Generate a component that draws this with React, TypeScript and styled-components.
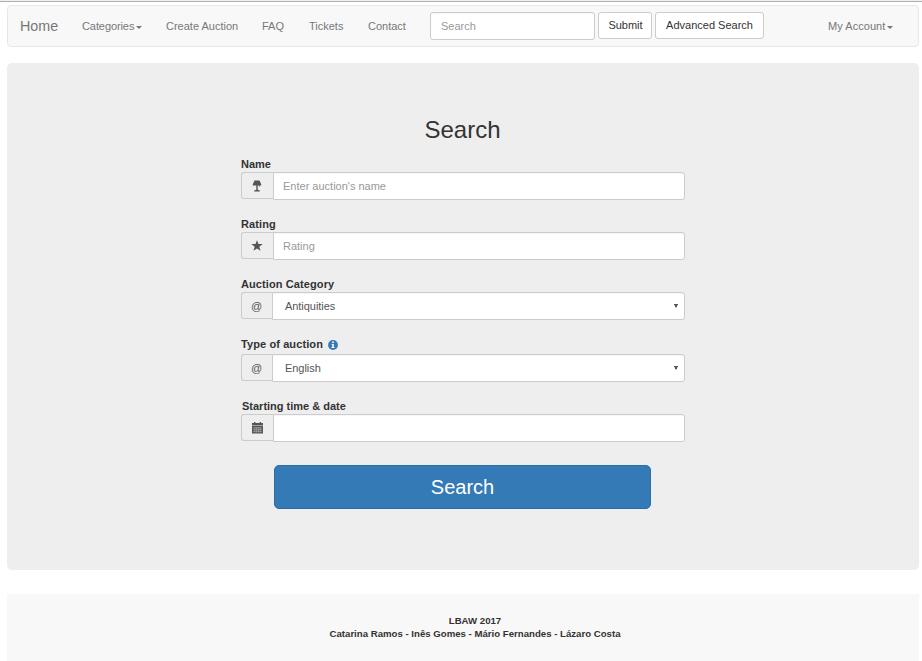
import React from "react";
import styled, { createGlobalStyle } from "styled-components";

const GlobalStyle = createGlobalStyle`
  *, *::before, *::after { box-sizing: border-box; }
  body {
    margin: 0;
    background: #fff;
    color: #333;
    font-family: "Liberation Sans", Arial, Helvetica, sans-serif;
    font-size: 11px;
    line-height: 16px;
  }
  input, button { font-family: inherit; }
`;

const Page = styled.div`
  height: 661px;
  overflow: hidden;
  padding: 0 3px 0 7px;
`;

const TopRule = styled.div`
  height: 2px;
  margin: 0 -3px 3px -7px;
  background: #f0f0f0;
  border-bottom: 1px solid #b0b0b0;
`;

const Navbar = styled.nav`
  display: flex;
  height: 42px;
  padding: 6px 12px 0;
  background: #f8f8f8;
  border: 1px solid #e7e7e7;
  border-radius: 4px;
`;

const NavLink = styled.a<{ $w: number; $ls?: number }>`
  display: flex;
  align-items: center;
  flex: none;
  width: ${(p) => p.$w}px;
  height: 28px;
  color: #777;
  letter-spacing: ${(p) => p.$ls ?? 0}px;
  white-space: nowrap;
`;

const Brand = styled(NavLink)`
  font-size: 14.3px;
`;

const AccountLink = styled(NavLink)`
  margin-left: auto;
`;

const Caret = styled.span`
  margin: 3px 0 0 2px;
  border: 3px solid transparent;
  border-top-color: currentColor;
  border-bottom: 0;
`;

const TextInput = styled.input`
  height: 28px;
  padding: 0 9px;
  color: #555;
  font-size: 11px;
  background: #fff;
  border: 1px solid #ccc;
  border-radius: 3px;
  box-shadow: inset 0 1px 1px rgba(0, 0, 0, 0.04);
  outline: 0;
  &::placeholder { color: #999; opacity: 1; }
`;

const NavInput = styled(TextInput)`
  width: 165px;
  padding: 0 10px;
  margin-right: 3px;
`;

const NavButton = styled.button<{ $w: number; $shift?: number }>`
  width: ${(p) => p.$w}px;
  height: 27px;
  margin-right: 3px;
  padding: 0 0 1px ${(p) => p.$shift ?? 0}px;
  color: #333;
  font-size: 11px;
  white-space: nowrap;
  background: #fff;
  border: 1px solid #ccc;
  border-radius: 3px;
`;

const Jumbotron = styled.main`
  height: 507px;
  margin-top: 16px;
  padding-top: 50px;
  background: #eee;
  border-radius: 5px;
`;

const Form = styled.form`
  width: 444px;
  margin-left: 234px;
`;

const Title = styled.h2`
  height: 43px;
  margin: 0 1px 0 0;
  font-size: 24px;
  font-weight: 400;
  line-height: 34px;
  text-align: center;
`;

const Group = styled.div`
  margin-bottom: 16px;
`;

const Label = styled.label<{ $h?: number; $ls?: number; $indent?: number }>`
  display: flex;
  height: ${(p) => p.$h ?? 16}px;
  padding-left: ${(p) => p.$indent ?? 0}px;
  font-weight: 700;
  letter-spacing: ${(p) => p.$ls ?? 0}px;
  white-space: nowrap;
`;

const InputRow = styled.div`
  display: flex;
  height: 28px;
`;

const Addon = styled.span<{ $w?: number }>`
  display: flex;
  align-items: center;
  justify-content: center;
  flex: none;
  width: ${(p) => p.$w ?? 32}px;
  height: 27px;
  padding-right: 1px;
  color: #555;
  background: #eee;
  border: 1px solid #ccc;
  border-right: 0;
  border-radius: 3px 0 0 3px;
`;

const Field = styled(TextInput)`
  flex: 1;
  min-width: 0;
  border-radius: 0 3px 3px 0;
`;

const SelectBox = styled.div`
  display: flex;
  flex: 1;
  align-items: center;
  justify-content: space-between;
  padding: 0 6px 0 12px;
  color: #555;
  letter-spacing: -0.05px;
  background: #fff;
  border: 1px solid #ccc;
  border-radius: 0 3px 3px 0;
  box-shadow: inset 0 1px 1px rgba(0, 0, 0, 0.04);
`;

const InfoIcon = styled.svg`
  margin: 4px 0 0 5px;
`;

const SubmitButton = styled.button`
  display: block;
  width: 377px;
  height: 44px;
  margin: 23px 0 0 33px;
  padding: 0;
  color: #fff;
  font-size: 20px;
  background: #337ab7;
  border: 1px solid #2e6da4;
  border-radius: 5px;
`;

const Footer = styled.footer`
  height: 67px;
  margin-top: 24px;
  padding: 20px 0 0 24px;
  background: #f8f8f8;
  font-size: 9.63px;
  font-weight: 700;
  line-height: 13px;
  text-align: center;
`;

const LampIcon = () => (
  <svg width="10" height="12" viewBox="0 0 10 12" fill="currentColor">
    <path d="M2.5.5h5L9.2 4.3v1.2H7.8v1H6.9v-1H5.7v4.2l2.1.9v.9H2.2v-.9l2.1-.9V5.5H.8V4.3z" />
  </svg>
);

const StarIcon = () => (
  <svg width="12" height="12" viewBox="0 0 12 12" fill="currentColor">
    <path d="M6 .3 7.5 4.1h4.2L8.3 6.7 9.6 10.8 6 8.4l-3.6 2.4 1.3-4.1L.3 4.1h4.2z" />
  </svg>
);

const CalendarIcon = () => (
  <svg width="11" height="12" viewBox="0 0 11 12">
    <path fill="#555" d="M0 1h2V0h1.4v1h4.2V0H9v1h2v2.6H0zM0 4h11v7.5H0z" />
    <path stroke="#bbb" strokeWidth=".5" d="M1 5.8h9M1 7.6h9M1 9.4h9M2.8 5v5.6M4.6 5v5.6M6.4 5v5.6M8.2 5v5.6" />
  </svg>
);

const SelectArrow = () => (
  <svg width="4" height="4" viewBox="0 0 4 4" fill="#555">
    <path d="M0 0h4v1.2H3V3.2H1V1.2H0z" />
  </svg>
);

export default function App() {
  return (
    <>
      <GlobalStyle />
      <Page>
        <TopRule />
        <Navbar>
          <Brand $w={62}>Home</Brand>
          <NavLink $w={84} $ls={-0.09}>Categories<Caret /></NavLink>
          <NavLink $w={96}>Create Auction</NavLink>
          <NavLink $w={47}>FAQ</NavLink>
          <NavLink $w={59}>Tickets</NavLink>
          <NavLink $w={62}>Contact</NavLink>
          <NavInput placeholder="Search" />
          <NavButton $w={54} $shift={1}>Submit</NavButton>
          <NavButton $w={109}>Advanced Search</NavButton>
          <AccountLink $w={78} $ls={0.05}>My Account<Caret /></AccountLink>
        </Navbar>
        <Jumbotron>
          <Form onSubmit={(e) => e.preventDefault()}>
            <Title>Search</Title>
            <Group>
              <Label>Name</Label>
              <InputRow>
                <Addon><LampIcon /></Addon>
                <Field placeholder="Enter auction's name" />
              </InputRow>
            </Group>
            <Group>
              <Label $ls={0.1}>Rating</Label>
              <InputRow>
                <Addon><StarIcon /></Addon>
                <Field placeholder="Rating" />
              </InputRow>
            </Group>
            <Group>
              <Label $ls={0.1}>Auction Category</Label>
              <InputRow>
                <Addon $w={31}>@</Addon>
                <SelectBox>Antiquities<SelectArrow /></SelectBox>
              </InputRow>
            </Group>
            <Group>
              <Label $h={18} $ls={0.1}>
                Type of auction
                <InfoIcon width="10" height="10" viewBox="0 0 10 10">
                  <circle cx="5" cy="5" r="4.9" fill="#337ab7" />
                  <path fill="#fff" d="M4.1 1.6h1.7V3H4.1zM3.5 3.9h2.3v3h.7v1h-3v-1h.8V4.8h-.8z" />
                </InfoIcon>
              </Label>
              <InputRow>
                <Addon $w={31}>@</Addon>
                <SelectBox>English<SelectArrow /></SelectBox>
              </InputRow>
            </Group>
            <Group>
              <Label $indent={1}>Starting time &amp; date</Label>
              <InputRow>
                <Addon><CalendarIcon /></Addon>
                <Field />
              </InputRow>
            </Group>
            <SubmitButton>Search</SubmitButton>
          </Form>
        </Jumbotron>
        <Footer>
          <div>LBAW 2017</div>
          <div>Catarina Ramos - Inês Gomes - Mário Fernandes - Lázaro Costa</div>
        </Footer>
      </Page>
    </>
  );
}
